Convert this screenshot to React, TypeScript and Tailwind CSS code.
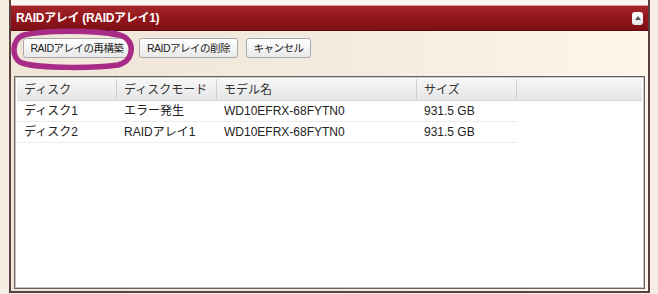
import React from "react";

const font = { fontFamily: '"Liberation Sans", "Noto Sans CJK JP", sans-serif' };

function Btn({ children, w }: { children: React.ReactNode; w: string }) {
  return (
    <button
      className={`${w} h-[20px] rounded-[3px] border border-[#a9a9a9] bg-gradient-to-b from-[#ffffff] to-[#e9e9e9] text-[10.5px] leading-[18px] text-[#222] tracking-[-0.5px] whitespace-nowrap flex items-center justify-center`}
    >
      {children}
    </button>
  );
}

const rows = [
  ["ディスク1", "エラー発生", "WD10EFRX-68FYTN0", "931.5 GB"],
  ["ディスク2", "RAIDアレイ1", "WD10EFRX-68FYTN0", "931.5 GB"],
];

export default function App() {
  return (
    <div
      className="relative w-[658px] h-[294px] overflow-hidden bg-[#f6eee2]"
      style={font}
    >
      <div className="ml-[9px] w-[641px] h-[293px] flex flex-col border-x-2 border-b-2 border-[#5b4040]">
        <div className="h-[5px] bg-[#fbf7f0]" />
        <div className="h-[26px] flex items-center justify-between pl-[5px] pr-[5px] bg-gradient-to-b from-[#a3262a] via-[#92161b] to-[#7e1016] border-t border-[#d99a9a] border-b border-b-[#5a0a0c]">
          <span className="text-white font-bold text-[12px] leading-none tracking-[-0.3px]">
            RAIDアレイ (RAIDアレイ1)
          </span>
          <span className="w-[11px] h-[13px] rounded-[3px] bg-gradient-to-b from-white to-[#e4e4e4] flex items-center justify-center">
            <span className="w-0 h-0 border-x-[3px] border-x-transparent border-b-[4px] border-b-[#555]" />
          </span>
        </div>
        <div className="flex-1 flex flex-col bg-gradient-to-r from-[#efe6d8] via-[#f3ebdf] to-[#fdf6ea] px-[3px] pb-[2px]">
          <div className="flex gap-[8px] pl-[9px] pt-[7px] h-[45px]">
            <Btn w="w-[108px]">RAIDアレイの再構築</Btn>
            <Btn w="w-[99px]">RAIDアレイの削除</Btn>
            <Btn w="w-[65px]">キャンセル</Btn>
          </div>
          <div className="flex-1 border border-[#6a6363] shadow-[inset_0_0_0_1px_#c9c4c4] bg-white p-[2px]">
            <div className="grid grid-cols-[100px_100px_200px_100px_1fr] h-[22px] bg-gradient-to-b from-[#f7f7f7] to-[#e6e6e6] border-b border-[#dcdcdc] text-[12px] text-[#333]">
              {["ディスク", "ディスクモード", "モデル名", "サイズ", ""].map((h, i) => (
                <div
                  key={i}
                  className={`flex items-center px-[7px] ${i < 4 ? "border-r border-[#d0d0d0]" : ""}`}
                >
                  {h}
                </div>
              ))}
            </div>
            {rows.map((r, i) => (
              <div
                key={i}
                className="grid grid-cols-[100px_100px_200px_100px] w-[500px] h-[21px] border-b border-[#ececec] text-[12px] text-[#222]"
              >
                {r.map((c, j) => (
                  <div key={j} className="flex items-center px-[7px]">
                    {c}
                  </div>
                ))}
              </div>
            ))}
          </div>
        </div>
      </div>
      <svg
        className="absolute inset-0 pointer-events-none"
        width="658"
        height="294"
        viewBox="0 0 658 294"
      >
        <path
          d="M 118 35 C 95 30, 45 30, 24 35 C 11 39, 11 59, 22 63 C 42 69, 98 68, 118 65 C 133 61, 134 46, 127 39 C 124 36, 118 34, 112 33"
          fill="none"
          stroke="#a72b87"
          strokeWidth="5.5"
          strokeLinecap="round"
        />
      </svg>
    </div>
  );
}
